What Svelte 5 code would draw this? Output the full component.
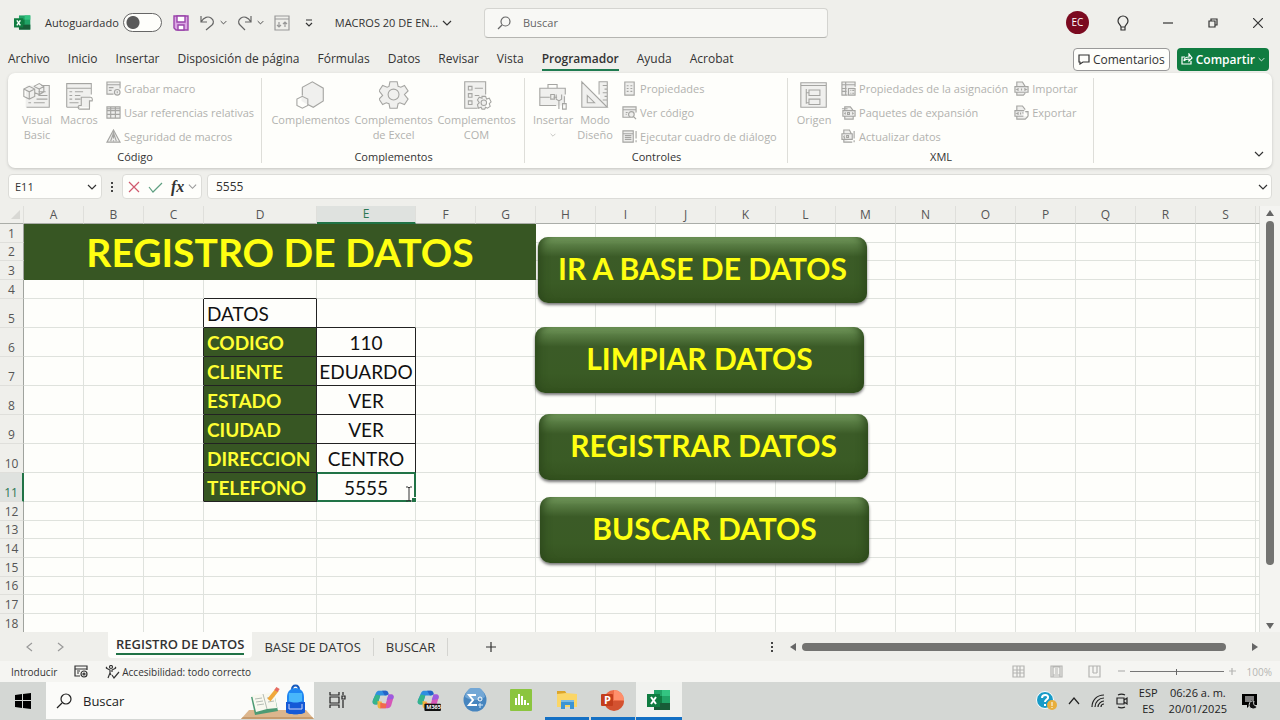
<script>
  const menu = ['Archivo', 'Inicio', 'Insertar', 'Disposición de página', 'Fórmulas', 'Datos', 'Revisar', 'Vista', 'Programador', 'Ayuda', 'Acrobat']

  const groups = [
    {
      name: 'Código',
      big: [
        { icon: 'visualBasic', lines: ['Visual', 'Basic'] },
        { icon: 'macros', lines: ['Macros'] },
      ],
      lists: [[
        { icon: 'record', text: 'Grabar macro' },
        { icon: 'table', text: 'Usar referencias relativas' },
        { icon: 'warning', text: 'Seguridad de macros' },
      ]],
    },
    {
      name: 'Complementos',
      wide: true,
      big: [
        { icon: 'hexagons', lines: ['Complementos'] },
        { icon: 'gear', lines: ['Complementos', 'de Excel'] },
        { icon: 'com', lines: ['Complementos', 'COM'] },
      ],
      lists: [],
    },
    {
      name: 'Controles',
      big: [
        { icon: 'toolbox', lines: ['Insertar'], arrow: true },
        { icon: 'design', lines: ['Modo', 'Diseño'] },
      ],
      lists: [[
        { icon: 'properties', text: 'Propiedades' },
        { icon: 'code', text: 'Ver código' },
        { icon: 'dialog', text: 'Ejecutar cuadro de diálogo' },
      ]],
    },
    {
      name: 'XML',
      big: [{ icon: 'source', lines: ['Origen'] }],
      lists: [
        [
          { icon: 'map', text: 'Propiedades de la asignación' },
          { icon: 'pack', text: 'Paquetes de expansión' },
          { icon: 'refresh', text: 'Actualizar datos' },
        ],
        [
          { icon: 'xmlImport', text: 'Importar' },
          { icon: 'xmlExport', text: 'Exportar' },
        ],
      ],
    },
  ]

  // [shape path, darker detail path]
  const bigIcons = {
    visualBasic: ['M5 6h25v24H4V19', 'M5 30h25V6h-9M18 13h8M18 17h10M16 21h12M7 25h3m3 0h12M2 10l6-3 6 3v8l-6 3-6-3zM2 10l6 3 6-3M8 13v8M13 7l6-3 5 3v6l-5 3-5-2M13 7l6 3 5-3M19 10v6'],
    macros: ['M3 5h26v25H3z', 'M3 30V4h27v12M3 9h27M6 13h3m3 0h9M6 17h3m3 0h6M6 21h3m3 0h6M6 25h10M3 30h14M19 19h10c3 0 2 4 2 4h-3v9H17c-2 0-2-4 0-4h2z'],
    hexagons: ['M18 2l12 7v14l-12 7-12-7V9z', 'M7 17V8l11-6 12 7v14l-11 7-6-3M7 18l6 3v7l-6 3-6-3v-7z'],
    gear: ['M12 2h8l1 5 3 1 4-2 4 6-4 4 4 5-4 6-5-2-2 1-1 5h-8l-1-5-3-1-4 2-4-6 4-4-4-5 4-6 5 2 2-1z', 'M12 2h8l1 5 3 1 4-2 4 6-4 4 4 5-4 6-5-2-2 1-1 5h-8l-1-5-3-1-4 2-4-6 4-4-4-5 4-6 5 2 2-1zM22 16a6 6 0 1 1-12 0 6 6 0 0 1 12 0z'],
    com: ['M3 2h23v29H3z', 'M26 16V2H3v29h14M7 7h4v4H7zM7 15h4v4H7zM7 23h4v4H7zM14 9h9M14 17h5M22 18h4l1 3 3-1 2 4-2 2 1 3-3 2-2-1-1 2h-3l-1-2-3 1-1-4 2-2-2-3 2-3 3 1zM27 25a3 3 0 1 1-6 0 3 3 0 0 1 6 0z'],
    toolbox: ['M2 9h28v19H2z', 'M20 28H2V9h28v7M11 9V5h10v4M2 19h11m4 0h4M14 16h4v5h-4zM20 16v5l3 2v9M26 16v5l-3 2M29 18v7m-2 1h4v6h-4z'],
    design: ['M2 2v28h28V2h-8v20z', 'M2 2v28h28zM8 17v8h8zM21 16V2h9v28M30 6h-5M30 10h-3M30 14h-5M30 18h-3M30 22h-5'],
    source: ['M2 3h28v27H2z', 'M2 3h28v27H2zM2 6h28M8 10v16M8 14h3M8 25h3M11 11h12v6H11zM11 21h12v6H11z'],
  }

  const smallIcons = {
    record: 'M8 14H1V1h14v7M1 4h14M3 7h5M3 10h3M15 12a3 3 0 1 1-6 0 3 3 0 0 1 6 0zM12 11v2',
    table: 'M1 2h14v12H1zM1 4h14M1 6h14M1 10h14M5 2v12M10 2v12',
    warning: 'M8 1l7 13H1zM5 13l3-9 3 9M8 6v4M8 12v1',
    properties: 'M3 1h10v14H3zM5 5h2M9 5h2M5 8h2M9 8h2M5 11h2M9 11h2',
    code: 'M9 13H1V2h14v6M1 5h14M4 8h2M4 10h1M13 10a3 3 0 1 1-6 0 3 3 0 0 1 6 0zM12 12l3 3',
    dialog: 'M1 2h11v12H1zM1 5h11M3 7h7M3 9h7M3 11h7M15 2v8M15 12v2',
    map: 'M7 15H1V1h14v5M1 4h14M5 1v14M1 8h5M1 11h5M8 8h7v7H8zM10 10h1M12 10h2M10 13h1M12 13h2',
    pack: 'M4 6V2h6l3 4M1 4h6M2 6h13v6H2zM5 8l-1 1 1 1M7 8v2h2V8zM12 8l1 1-1 1M4 12v3h9v-3',
    refresh: 'M3 5V1h6l2 4M1 5h11v6H1zM4 7L3 8l1 2M6 7v2h2V7zM14 2v8M14 12v2M3 11v3h9',
    xmlImport: 'M3 6V1h6l3 5M1 6h14v6H1zM5 8L3 9l2 1M8 8v2M11 8l2 1-2 1M3 12v3h7l2-2',
    xmlExport: 'M3 6V1h6l3 4M11 6H1v6h9M5 8L3 9l2 1M7 8v2M9 8l1 1M3 12v3h9l3-3M12 7h3v5',
  }

  const columns = 'ABCDEFGHIJKLMNOPQRS'.split('')
  const plain = ['A', 'B', 'C']
  const after = columns.slice(5)

  const rows = [
    { n: 1, h: 19 }, { n: 2, h: 18 }, { n: 3, h: 19 }, { n: 4, h: 19 },
    { n: 5, h: 29, label: 'DATOS' },
    { n: 6, h: 29, label: 'CODIGO', value: '110' },
    { n: 7, h: 29, label: 'CLIENTE', value: 'EDUARDO' },
    { n: 8, h: 29, label: 'ESTADO', value: 'VER' },
    { n: 9, h: 29, label: 'CIUDAD', value: 'VER' },
    { n: 10, h: 29, label: 'DIRECCION', value: 'CENTRO' },
    { n: 11, h: 29, label: 'TELEFONO', value: '5555' },
    { n: 12, h: 19 }, { n: 13, h: 18 }, { n: 14, h: 19 }, { n: 15, h: 19 },
    { n: 16, h: 18 }, { n: 17, h: 19 }, { n: 18, h: 19 },
  ]

  // shapes drawn over the grid
  const shapes = [
    { text: 'IR A BASE DE DATOS', x: 538, y: 31 },
    { text: 'LIMPIAR DATOS', x: 535, y: 121 },
    { text: 'REGISTRAR DATOS', x: 539, y: 208 },
    { text: 'BUSCAR DATOS', x: 540, y: 291 },
  ]

  let cell = 'E11'
  let formula = '5555'
  let zoom = 50
</script>

{#snippet chevron(size)}
  <svg width={size} height={size} viewBox="0 0 10 10" class="line"><path d="M1 3l4 4 4-4" /></svg>
{/snippet}

{#snippet excel(size)}
  <svg width={size} height={size} viewBox="0 0 24 24">
    <path fill="#21a366" d="M7 2h16v20H7z" />
    <path fill="#33c481" d="M15 2h8v6h-8z" />
    <path fill="#107c41" d="M7 8h8v7H7z" />
    <path fill="#185c37" d="M7 15h16v7H7z" />
    <path fill="#107c41" d="M0 6h13v13H0z" />
    <path stroke="#fff" stroke-width="2" fill="none" d="M4 9l5 7M9 9l-5 7" />
  </svg>
{/snippet}

{#snippet copilot()}
  <path fill="#2f8fe0" d="M7 2h8c2 0 3 2 3 4l-2 1H9L6 17H4c-3 0-4-2-3-5l3-7c1-2 2-3 3-3z" />
  <path fill="#35b58a" d="M4 6l5 1-3 10H4c-3 0-4-2-3-5z" />
  <path fill="#2563c8" d="M11 2h4c2 0 3 2 3 4l-4 1z" />
  <path fill="#f0b43c" d="M6 13l5 1-1 7c-3 1-4-1-4-3z" />
  <path fill="#d557b8" d="M18 6h3c3 0 3 3 2 5l-2 7c-1 2-2 3-4 3h-7l2-4 3-1z" />
  <path fill="#f2694c" d="M9 15l7 1-1 5h-6z" />
  <path fill="#9c5be0" d="M18 6h3c3 0 3 3 2 5l-7 1z" />
{/snippet}

<div class="window">
  <header class="titlebar">
    <div class="quick">
      {@render excel(17)}
      <label class="autosave">Autoguardado <input type="checkbox" role="switch" /></label>
      <button class="save" aria-label="Guardar">
        <svg width="16" height="16" viewBox="0 0 16 16"><path fill="#dba6e4" stroke="#9b45ab" stroke-width="1.4" d="M1 1h14v14H3l-2-2z" /><path fill="#fff" stroke="#9b45ab" stroke-width="1.4" d="M4 1h8v6H4zM5 15v-5h6v5z" /></svg>
      </button>
      <button class="undo" aria-label="Deshacer"><svg width="16" height="16" viewBox="0 0 16 16" class="line"><path d="M1 1v6h6M1 7c3-5 7-6 10-4 3 2 3 5 1 7l-6 5" /></svg></button>
      <button class="tiny" aria-label="Opciones de deshacer">{@render chevron(7)}</button>
      <button class="undo" aria-label="Rehacer"><svg width="16" height="16" viewBox="0 0 16 16" class="line"><path d="M14 1v6H8M14 7C11 2 7 1 4 3 1 5 1 8 3 10l5 5" /></svg></button>
      <button class="tiny" aria-label="Opciones de rehacer">{@render chevron(7)}</button>
      <button class="faded" aria-label="Ordenar"><svg width="16" height="16" viewBox="0 0 16 16" class="line"><path d="M1 1h14v14H1zM1 4h14M5 7v5M3 10l2 2 2-2M11 12V7M9 9l2-2 2 2" /></svg></button>
      <button class="custom" aria-label="Personalizar"><svg width="8" height="8" viewBox="0 0 8 8" class="line"><path d="M1 1h6M1 4l3 3 3-3" /></svg></button>
      <button class="doc">MACROS 20 DE EN... {@render chevron(10)}</button>
    </div>
    <label class="search">
      <svg width="14" height="14" viewBox="0 0 14 14" class="line"><circle cx="8.500" cy="5.500" r="4.500" /><path d="M5 9l-4 4" /></svg>
      <input type="search" placeholder="Buscar" aria-label="Buscar" />
    </label>
    <div class="controls">
      <button aria-label="Cuenta"><span class="avatar">EC</span></button>
      <button aria-label="Sugerencias"><svg width="12" height="16" viewBox="0 0 12 16" class="line"><path d="M4 12c0-2-3-3-3-6a5 5 0 0 1 10 0c0 3-3 4-3 6zM4 12v3h4v-3" /></svg></button>
      <button aria-label="Minimizar"><svg width="10" height="10" viewBox="0 0 10 10" class="line"><path d="M0 5h10" /></svg></button>
      <button aria-label="Restaurar"><svg width="10" height="10" viewBox="0 0 10 10" class="line"><path d="M1 3h6v6H1zM3 3V1h6v6H7" /></svg></button>
      <button aria-label="Cerrar"><svg width="10" height="10" viewBox="0 0 10 10" class="line"><path d="M0 0l10 10M10 0L0 10" /></svg></button>
    </div>
  </header>

  <nav class="menu">
    {#each menu as item}
      <a href="#{item}" class:current={item === 'Programador'}>{item}</a>
    {/each}
    <div class="actions">
      <button class="comments"><svg width="12" height="11" viewBox="0 0 12 11" class="line"><path d="M1 1h10v7H5l-3 2V8H1z" /></svg>Comentarios</button>
      <button class="share"><svg width="12" height="12" viewBox="0 0 12 12" class="line"><path d="M4 4H1v7h9V8M3 8c0-3 2-4 5-4V1l3 4-3 3V6C6 6 4 6 3 8z" /></svg>Compartir {@render chevron(7)}</button>
    </div>
  </nav>

  <section class="ribbon">
    {#each groups as group}
      <div class="group" class:wide={group.wide}>
        <div class="tools">
          {#each group.big as tool}
            <button class="tool" disabled>
              <svg width="30" height="30" viewBox="0 0 33 33"><path class="shape" d={bigIcons[tool.icon][0]} /><path class="detail" d={bigIcons[tool.icon][1]} /></svg>
              {#each tool.lines as line}<span>{line}</span>{/each}
              {#if tool.arrow}<span class="arrow">{@render chevron(6)}</span>{/if}
            </button>
          {/each}
          {#each group.lists as list}
            <div class="list">
              {#each list as item}
                <button disabled>
                  <svg width="15" height="15" viewBox="0 0 16 16"><path class="detail tinted" d={smallIcons[item.icon]} /></svg>
                  {item.text}
                </button>
              {/each}
            </div>
          {/each}
        </div>
        <div class="group-name">{group.name}</div>
      </div>
    {/each}
    <button class="collapse" aria-label="Contraer la cinta">{@render chevron(10)}</button>
  </section>

  <section class="formula-bar">
    <div class="field name">
      <input bind:value={cell} aria-label="Cuadro de nombres" />
      {@render chevron(10)}
    </div>
    <svg width="4" height="12" viewBox="0 0 4 12" class="dots"><path d="M1 1h2v2H1zM1 5h2v2H1zM1 9h2v2H1z" /></svg>
    <div class="field fx">
      <button class="cancel" aria-label="Cancelar"><svg width="12" height="12" viewBox="0 0 12 12" class="line"><path d="M1 1l10 10M11 1L1 11" /></svg></button>
      <button class="accept" aria-label="Introducir"><svg width="15" height="12" viewBox="0 0 15 12" class="line"><path d="M1 6l4 5 9-9" /></svg></button>
      <button class="function" aria-label="Insertar función">fx</button>
      <button class="faded" aria-label="Funciones">{@render chevron(9)}</button>
    </div>
    <div class="field formula">
      <input bind:value={formula} aria-label="Barra de fórmulas" />
      {@render chevron(10)}
    </div>
  </section>

  <main class="sheet">
    <div class="grid">
      <table>
        <colgroup>
          <col class="col-num" />
          {#each columns as c}<col class={c === 'D' ? 'col-label' : c === 'E' ? 'col-value' : 'col-plain'} />{/each}
          <col />
        </colgroup>
        <thead>
          <tr>
            <th class="corner" aria-label="Seleccionar todo"><svg width="9" height="9" viewBox="0 0 9 9"><path d="M9 0v9H0z" /></svg></th>
            {#each columns as c}<th scope="col" class:picked={c === 'E'}>{c}</th>{/each}
            <th></th>
          </tr>
        </thead>
        <tbody>
          {#each rows as row}
            <tr style="height: {row.h}px">
              <th scope="row" class:picked={row.n === 11}>{row.n}</th>
              {#if row.n === 1}
                <td class="banner" colspan="7" rowspan="3">REGISTRO DE DATOS</td>
                {#each after.slice(2) as c}<td></td>{/each}
              {:else if row.n < 4}
                {#each after.slice(2) as c}<td></td>{/each}
              {:else}
                {#each plain as c}<td class:edge={row.label && c === 'C'}></td>{/each}
                <td class:boxed={row.label} class:key={row.value} class:over={row.n === 4}>{row.label ?? ''}</td>
                <td class:boxed={row.value} class:value={row.value} class:over={row.n === 5} class:active={row.n === 11} class:above={row.n === 10}>{row.value ?? ''}</td>
                {#each after as c}<td></td>{/each}
              {/if}
              <td></td>
            </tr>
          {/each}
        </tbody>
      </table>
      {#each shapes as shape}
        <button class="shape-button" style="left: {shape.x}px; top: {shape.y}px">{shape.text}</button>
      {/each}
      <svg class="cursor" width="8" height="16" viewBox="0 0 8 16"><path d="M1 1h2l1 1 1-1h2M4 2v12M1 15h2l1-1 1 1h2" /></svg>
    </div>
    <div class="vscroll">
      <svg width="8" height="6" viewBox="0 0 8 6"><path d="M4 0l4 6H0z" /></svg>
      <div class="thumb"></div>
      <svg width="8" height="6" viewBox="0 0 8 6"><path d="M0 0h8L4 6z" /></svg>
    </div>
  </main>

  <section class="sheet-tabs">
    <div class="steps">
      <button aria-label="Hoja anterior"><svg width="7" height="10" viewBox="0 0 7 10" class="line"><path d="M6 1L1 5l5 4" /></svg></button>
      <button aria-label="Hoja siguiente"><svg width="7" height="10" viewBox="0 0 7 10" class="line"><path d="M1 1l5 4-5 4" /></svg></button>
    </div>
    <button class="tab selected"><span>REGISTRO DE DATOS</span></button>
    <button class="tab">BASE DE DATOS</button>
    <button class="tab">BUSCAR</button>
    <button class="add" aria-label="Hoja nueva"><svg width="12" height="12" viewBox="0 0 12 12" class="line"><path d="M6 1v10M1 6h10" /></svg></button>
    <svg width="4" height="12" viewBox="0 0 4 12" class="dots"><path d="M1 1h2v2H1zM1 5h2v2H1zM1 9h2v2H1z" /></svg>
    <div class="hscroll">
      <svg width="6" height="8" viewBox="0 0 6 8"><path d="M6 0v8L0 4z" /></svg>
      <div class="thumb"></div>
      <svg width="6" height="8" viewBox="0 0 6 8"><path d="M0 0v8l6-4z" /></svg>
    </div>
  </section>

  <section class="status">
    <span class="mode">Introducir</span>
    <svg width="14" height="13" viewBox="0 0 14 13" class="line"><path d="M6 11H1V1h12v4M1 4h12M3 6h3M3 8h2" /><circle cx="10" cy="9" r="3" /><circle cx="10" cy="9" r="1" /></svg>
    <span class="access"><svg width="15" height="14" viewBox="0 0 15 14" class="line"><circle cx="6" cy="2" r="1.500" /><path d="M1 3l4 2v3l-2 5M11 3L7 5v2M5 8l1 2M1 3l1-1M11 3l-1-1M7 10l2 3 5-6" /></svg>Accesibilidad: todo correcto</span>
    <div class="views">
      <button aria-label="Normal"><svg width="13" height="13" viewBox="0 0 13 13" class="line"><path d="M1 1h11v11H1zM1 5h11M1 8h11M5 1v11M8 1v11" /></svg></button>
      <button aria-label="Diseño de página"><svg width="13" height="13" viewBox="0 0 13 13" class="line"><path d="M1 1h11v11H1zM3 1v11M10 1v11M5 4h3M5 6h3M5 8h3M3 10h7M3 2h7" /></svg></button>
      <button aria-label="Salto de página"><svg width="13" height="13" viewBox="0 0 13 13" class="line"><path d="M1 1h11v11H1zM5 1v7M9 1v7M5 8h4" /></svg></button>
    </div>
    <div class="zoom">
      <button aria-label="Alejar"><svg width="7" height="7" viewBox="0 0 7 7" class="line"><path d="M0 3h7" /></svg></button>
      <input type="range" bind:value={zoom} aria-label="Zoom" />
      <button aria-label="Acercar"><svg width="7" height="7" viewBox="0 0 7 7" class="line"><path d="M0 3h7M3 0v7" /></svg></button>
      <span>100%</span>
    </div>
  </section>

  <footer class="taskbar">
    <button class="start" aria-label="Inicio"><svg width="16" height="16" viewBox="0 0 16 16"><path d="M0 2l7-1v6H0zM8 1l8-1v7H8zM0 8h7v7l-7-1zM8 8h8v8l-8-1z" /></svg></button>
    <label class="task-search">
      <svg width="16" height="16" viewBox="0 0 16 16" class="line"><circle cx="10" cy="6" r="5" /><path d="M6 10l-5 5" /></svg>
      <input type="search" placeholder="Buscar" aria-label="Buscar en Windows" />
      <svg class="art" width="73" height="35" viewBox="0 0 73 35">
        <path fill="#dcb68d" d="M8 26h57l8 9H0z" /><path fill="#c69b6d" d="M2 33h69l2 2H0z" />
        <path fill="#4c9b74" d="M10 13l23-4 4 18-23 4z" /><path fill="#f8f8ef" d="M11 11l11-1 11-2 3 16-10 1-11 3z" />
        <path stroke="#b5bdb5" fill="none" d="M22 10l4 15M14 15l7-1M15 18l7-1M16 21l7-1M26 14l6-1M27 18l6-1" />
        <path stroke="#f0a83b" stroke-width="4" d="M28 16l8-10" /><path stroke="#e66c62" stroke-width="4" d="M35 7l2-3" />
        <path fill="none" stroke="#1559bd" stroke-width="2" d="M51 6c0-6 7-6 7 0" />
        <path fill="#1f86f2" d="M46 13c0-12 17-12 17 0v15c0 3-17 3-17 0z" /><path fill="#1559d6" d="M45 18h19v10c0 3-19 3-19 0z" />
        <path fill="#48b7fb" d="M48 9h13v8c-4 2-9 2-13 0z" /><path fill="none" stroke="#d0d5f6" d="M48 20v5h13v-5" />
      </svg>
    </label>
    <div class="apps">
      <button aria-label="Vista de tareas"><svg width="17" height="16" viewBox="0 0 17 16" class="line"><path d="M1 0v3h9V0M1 5h9v6H1zM1 16v-3h9v3M14 0v3M14 8v8" /><path d="M13 4h3v3h-3z" /></svg></button>
      <button aria-label="Copilot"><svg width="22" height="22" viewBox="0 0 24 24">{@render copilot()}</svg></button>
      <button aria-label="Microsoft 365 Copilot"><svg width="24" height="22" viewBox="0 0 26 24">{@render copilot()}<rect x="8" y="16" width="18" height="8" rx="1" fill="#111" /><text x="10" y="22" class="m365">M365</text></svg></button>
      <button aria-label="Estadística"><svg width="24" height="24" viewBox="0 0 24 24"><circle cx="12" cy="12" r="11.500" fill="#4685bf" /><path fill="#73a7d5" d="M2 9a10 10 0 0 1 20 0c-6 4-14 4-20 0z" /><path fill="none" stroke="#fff" stroke-width="2" d="M13 7H6l4 5-4 5h8" /><circle cx="17" cy="11" r="2" fill="none" stroke="#fff" /><path stroke="#d8e9f7" d="M17 15v5M15 17h5" /></svg></button>
      <button aria-label="Gráficos"><svg width="22" height="22" viewBox="0 0 22 22"><rect width="22" height="22" fill="#8bc53f" rx="1" /><path stroke="#fff" stroke-width="2" d="M6 16V9M9 16V5M12 16V7M15 16v-5M18 16v-2" /></svg></button>
      <button class="running" aria-label="Explorador de archivos"><svg width="22" height="20" viewBox="0 0 22 20"><path fill="#dca52b" d="M1 1h8l2 3H1z" /><path fill="#fbd667" d="M1 4l9-1 11 1v13H1z" /><path fill="#3b94d4" d="M5 10h13v9h-4v-4H9v4H5z" /><path fill="#79bae4" d="M5 10h13v2H5z" /></svg></button>
      <button class="running" aria-label="PowerPoint"><svg width="24" height="22" viewBox="0 0 24 22"><circle cx="13" cy="11" r="10" fill="#ed6c47" /><path fill="#ff8f6b" d="M13 1a10 10 0 0 1 10 10H13z" /><path fill="#d35230" d="M3 12h20a10 10 0 0 1-20 0z" /><rect y="5" width="12" height="12" rx="1" fill="#c43e1c" /><text x="3" y="15" class="letter">P</text></svg></button>
      <button class="running front" aria-label="Excel">{@render excel(24)}</button>
    </div>
    <div class="tray">
      <button aria-label="Ayuda"><svg width="21" height="20" viewBox="0 0 21 20"><circle cx="9" cy="9" r="8.500" fill="#189bc7" stroke="#fff" /><path fill="none" stroke="#fff" stroke-width="2" d="M6 7c0-4 7-4 6 0-1 2-3 2-3 4M9 13v2" /><circle cx="16" cy="14" r="5" fill="#e8ae3c" /><path stroke="#fff" d="M16 11v4M16 16v1" /></svg></button>
      <button aria-label="Iconos ocultos"><svg width="12" height="8" viewBox="0 0 12 8" class="line"><path d="M1 7l5-6 5 6" /></svg></button>
      <button aria-label="Red"><svg width="14" height="14" viewBox="0 0 14 14" class="line"><path d="M1 13C1 6 6 1 13 1M4 13c0-5 4-9 9-9M7 13c0-3 3-6 6-6M10 13c0-2 1-3 3-3" /></svg></button>
      <button aria-label="Cámara"><svg width="12" height="16" viewBox="0 0 12 16" class="line"><path d="M1 5h7v6H1zM8 7l3-2v6L8 9M2 2c2-1 5-1 7 0M2 14c2 1 5 1 7 0" /></svg></button>
      <span class="lang">ESP<br />ES</span>
      <time datetime="2025-01-20T18:26">06:26 a. m.<br />20/01/2025</time>
      <button aria-label="Notificaciones"><svg width="16" height="16" viewBox="0 0 16 16"><path d="M0 1h15v11H8l-3 3v-3H0z" /><path stroke="#fff" d="M3 4h9M3 6h9M3 8h6" /><path fill="#111" stroke="#d9dcda" d="M12 8a4 4 0 1 0 3 5c-3 0-4-2-3-5z" /></svg></button>
    </div>
  </footer>
</div>

<style>
  :global(body) {
    margin: 0;
  }
  .window {
    display: flex;
    flex-direction: column;
    height: 100vh;
    overflow: hidden;
    background: #efefeb;
    color: #333;
    font-family: 'Open Sans', 'Noto Sans', sans-serif;
    font-size: 11px;
  }
  button,
  input {
    box-sizing: border-box;
    margin: 0;
    padding: 0;
    border: 0;
    background: none;
    color: inherit;
    font: inherit;
    outline: none;
  }
  button {
    display: flex;
    align-items: center;
    justify-content: center;
    white-space: nowrap;
  }
  svg {
    display: block;
    flex: none;
  }
  .line {
    fill: none;
    stroke: currentColor;
    stroke-width: 1.2;
  }
  .faded {
    color: #999;
  }

  .titlebar {
    display: flex;
    align-items: center;
    height: 45px;
  }
  .quick {
    display: flex;
    align-items: center;
    flex: 0 0 470px;
    padding-left: 14px;
  }
  .autosave {
    display: flex;
    align-items: center;
    gap: 4px;
    margin: 0 11px 0 14px;
  }
  .autosave input {
    appearance: none;
    width: 39px;
    height: 19px;
    border: 1px solid #666;
    border-radius: 10px;
    background: radial-gradient(circle at 9px 50%, #5a5a5a 6px, #fefefb 7px);
  }
  .undo {
    color: #666;
  }
  .tiny {
    margin: 0 10px 0 4px;
  }
  .save {
    margin-right: 11px;
  }
  .custom {
    margin: 0 22px 0 15px;
  }
  .doc {
    gap: 4px;
  }
  .search {
    display: flex;
    align-items: center;
    gap: 12px;
    flex: 0 1 344px;
    height: 30px;
    box-sizing: border-box;
    padding: 0 12px;
    border: 1px solid #d4d4d0;
    border-bottom-color: #b5b5b1;
    border-radius: 4px;
    background: #f8f8f5;
    color: #666;
  }
  .search input {
    flex: 1;
    min-width: 0;
  }
  input::placeholder {
    color: inherit;
    opacity: 1;
  }
  .controls {
    display: flex;
    margin-left: auto;
  }
  .controls button {
    width: 45px;
    height: 45px;
  }
  .avatar {
    width: 23px;
    border-radius: 50%;
    background: #7b0a20;
    color: #fff;
    font-size: 10px;
    line-height: 23px;
  }

  .menu {
    display: flex;
    align-items: center;
    gap: 18px;
    height: 28px;
    padding: 0 11px 0 8px;
    font-size: 12px;
  }
  .menu a {
    height: 20px;
    line-height: 20px;
    color: inherit;
    text-decoration: none;
    white-space: nowrap;
  }
  .menu .current {
    box-shadow: 0 2px #1e7b50;
    font-weight: 600;
  }
  .actions {
    display: flex;
    gap: 7px;
    margin-left: auto;
  }
  .actions button {
    height: 23px;
    gap: 3px;
    padding: 0 4px;
    border-radius: 4px;
  }
  .comments {
    border: 1px solid #999;
    background: #fefefb;
  }
  .share {
    background: #107c41;
    color: #fff;
    font-weight: 600;
  }

  .ribbon {
    display: flex;
    height: 95px;
    margin: 0 8px;
    border-radius: 7px;
    background: #fefefb;
    box-shadow: 0 1px 3px #c4c4c0;
  }
  .group {
    display: flex;
    flex-direction: column;
    flex: 0 0 263px;
    position: relative;
    box-sizing: border-box;
    padding: 3px 7px;
  }
  .group:first-child {
    flex-basis: 254px;
    padding: 3px 8px;
  }
  .group:nth-child(4) {
    flex-basis: 306px;
    padding: 3px 5px;
  }
  .group::after {
    content: '';
    position: absolute;
    top: 5px;
    right: 0;
    bottom: 5px;
    border-right: 1px solid #deded9;
  }
  .tools {
    display: flex;
    height: 73px;
    color: #b2b2af;
  }
  .tool {
    flex-direction: column;
    justify-content: flex-start;
    width: 42px;
    padding-top: 4px;
    line-height: 15px;
  }
  .tool svg {
    margin-bottom: 2px;
  }
  .wide .tool {
    width: 83px;
  }
  .arrow svg {
    margin: 5px 0;
  }
  .shape {
    fill: #f0f0ee;
  }
  .detail {
    fill: none;
    stroke: #a5a5a2;
    stroke-width: 1.2;
  }
  .tinted {
    fill: #eeeeec;
  }
  .list {
    padding-left: 6px;
  }
  .list button {
    gap: 3px;
    height: 24px;
  }
  .group-name {
    line-height: 16px;
    text-align: center;
  }
  .collapse {
    align-self: flex-end;
    margin: 0 8px 9px auto;
  }

  .formula-bar {
    display: flex;
    align-items: center;
    height: 25px;
    margin: 6px 8px 7px;
    font-size: 12px;
  }
  .field {
    display: flex;
    align-items: center;
    box-sizing: border-box;
    height: 25px;
    border: 1px solid #dcdcd8;
    border-radius: 4px;
    background: #fefefb;
  }
  .field input {
    flex: 1;
    min-width: 0;
  }
  .name {
    width: 94px;
    padding: 0 4px 0 6px;
    font-size: 11px;
  }
  .dots {
    margin: 0 8px;
    fill: #444;
  }
  .fx {
    gap: 8px;
    width: 80px;
    padding: 0 3px 0 5px;
    margin-right: 5px;
  }
  .fx .function {
    font: italic bold 16px 'Liberation Serif', serif;
  }
  .fx button:last-child {
    margin-left: -4px;
  }
  .cancel {
    color: #d0596e;
  }
  .accept {
    color: #5e9f80;
  }
  .formula {
    flex: 1;
    padding: 0 3px 0 8px;
  }

  .sheet {
    display: flex;
    flex: 1;
    min-height: 0;
  }
  .grid {
    position: relative;
    flex: 1;
    min-width: 0;
    overflow: hidden;
    background: #fefefb;
  }
  table {
    width: 100%;
    table-layout: fixed;
    border-spacing: 0;
    font-family: Lato, sans-serif;
    font-size: 19px;
    color: #111;
  }
  .col-num {
    width: 24px;
  }
  .col-plain {
    width: 60px;
  }
  .col-label {
    width: 113px;
  }
  .col-value {
    width: 99px;
  }
  th,
  td {
    box-sizing: border-box;
    height: inherit;
    padding: 0;
    line-height: 17px;
    white-space: nowrap;
  }
  td {
    border-right: 1px solid #dfe2dd;
    border-bottom: 1px solid #dfe2dd;
  }
  th {
    background: #efefeb;
    color: #555;
    font-family: 'Open Sans', sans-serif;
    font-size: 12px;
    font-weight: 400;
  }
  thead th {
    height: 18px;
    border-right: 1px solid #dfdfdb;
    border-bottom: 1px solid #aaada8;
    line-height: 16px;
  }
  tbody th {
    border-right: 1px solid #a0a39e;
    border-bottom: 1px solid #dfdfdb;
    vertical-align: bottom;
  }
  .corner svg {
    margin-left: 11px;
    fill: #d8d8d4;
  }
  th.picked {
    background: #dfe2df;
    color: #2c7855;
  }
  thead th.picked {
    border-bottom: 2px solid #217346;
  }
  tbody th.picked {
    border-right: 2px solid #217346;
  }
  td.banner {
    border: 0;
    background: #375623;
    color: #ff1;
    font-size: 39px;
    font-weight: 700;
    line-height: 50px;
    text-align: center;
  }
  td.edge {
    border-right-color: #222;
  }
  td.over {
    border-bottom-color: #222;
  }
  td.boxed {
    border-color: #222;
    padding-left: 3px;
  }
  td.key {
    background: #375623;
    color: #ff3;
    font-weight: 700;
  }
  td.value {
    padding: 0;
    text-align: center;
  }
  td.above {
    border-bottom-color: #217346;
  }
  td.active {
    position: relative;
    border: 1px solid #217346;
    border-width: 1px 2px 2px 1px;
  }
  td.active::after {
    content: '';
    position: absolute;
    right: -3px;
    bottom: -3px;
    width: 4px;
    height: 4px;
    border: 1px solid #fefefb;
    background: #217346;
  }
  .shape-button {
    position: absolute;
    width: 329px;
    height: 66px;
    padding-bottom: 5px;
    border-radius: 10px;
    background: linear-gradient(#779e60, #587c43 12%, #3b5b27 30%, #3a5b25 70%, #34521f);
    box-shadow: 0 2px 3px #777, inset 8px 0 8px -5px #2d491c, inset -8px 0 8px -5px #2d491c;
    color: #ff1;
    font: 700 30px Lato, sans-serif;
  }
  .cursor {
    position: absolute;
    left: 405px;
    top: 280px;
    fill: none;
    stroke: #333;
  }
  .vscroll {
    display: flex;
    flex-direction: column;
    align-items: center;
    gap: 5px;
    width: 20px;
    padding: 4px 0 3px;
    box-sizing: border-box;
    background: #f4f4f1;
  }
  .vscroll svg,
  .hscroll svg {
    fill: #666;
  }
  .thumb {
    border-radius: 4px;
    background: #737371;
  }
  .vscroll .thumb {
    width: 8px;
    flex: 0 0 82%;
    margin-bottom: auto;
  }

  .sheet-tabs {
    display: flex;
    align-items: center;
    height: 29px;
    font-size: 12px;
  }
  .steps {
    display: flex;
    gap: 24px;
    box-sizing: border-box;
    width: 108px;
    padding-left: 26px;
    color: #999;
  }
  .tab {
    height: 18px;
    padding: 0 12px;
    border-right: 1px solid #d4d4d0;
    font-size: 13px;
  }
  .selected {
    align-self: flex-start;
    height: 26px;
    padding: 0 8px;
    border: 0;
    border-radius: 0 0 4px 4px;
    background: #fefefb;
    font-size: 13px;
    font-weight: 600;
  }
  .selected span {
    border-bottom: 2px solid #217346;
    line-height: 18px;
  }
  .add {
    margin: 0 auto 0 37px;
  }
  .hscroll {
    display: flex;
    align-items: center;
    gap: 6px;
    box-sizing: border-box;
    width: 37%;
    padding: 0 6px 0 0;
    margin: 0 16px 0 8px;
  }
  .hscroll .thumb {
    height: 8px;
    flex: 0 1 424px;
    margin-right: auto;
  }

  .status {
    display: flex;
    align-items: center;
    gap: 17px;
    height: 21px;
    padding: 0 8px 0 11px;
    background: #f5f5f2;
    font-size: 10px;
  }
  .access {
    display: flex;
    align-items: center;
    gap: 2px;
  }
  .views {
    display: flex;
    gap: 25px;
    margin-left: auto;
    color: #b5b5b2;
  }
  .zoom {
    display: flex;
    align-items: center;
    gap: 5px;
    color: #b5b5b2;
  }
  .zoom input {
    appearance: none;
    width: 94px;
    height: 10px;
    background: linear-gradient(#777, #777) center / 100% 1px no-repeat;
  }
  .zoom input::-webkit-slider-thumb {
    appearance: none;
    width: 1px;
    height: 6px;
    background: #666;
  }
  .zoom span {
    margin-left: 6px;
  }

  .taskbar {
    display: flex;
    height: 38px;
    background: #d4d7d4;
    color: #222;
  }
  .start {
    width: 46px;
  }
  .task-search {
    display: flex;
    align-items: center;
    gap: 11px;
    box-sizing: border-box;
    width: 268px;
    padding-left: 10px;
    margin-bottom: 1px;
    background: #fbfbf9;
    font-size: 13px;
  }
  .task-search input {
    flex: 1;
    min-width: 0;
  }
  .art {
    align-self: flex-end;
  }
  .apps {
    display: flex;
  }
  .apps button {
    width: 46px;
    border-bottom: 3px solid transparent;
  }
  .apps .running {
    border-image: linear-gradient(90deg, transparent 4px, #1470c4 4px, #1470c4 42px, transparent 42px) 3;
  }
  .apps .front {
    border-image: none;
    border-color: #1470c4;
    background: #f1f2ef;
  }
  .m365 {
    fill: #fff;
    font-size: 6px;
    font-weight: 700;
  }
  .letter {
    fill: #fff;
    font-size: 11px;
    font-weight: 700;
  }
  .tray {
    display: flex;
    align-items: center;
    gap: 11px;
    margin-left: auto;
    padding-right: 22px;
  }
  .tray button {
    height: 38px;
  }
  .lang,
  time {
    line-height: 16px;
    text-align: center;
  }
  time {
    margin-right: 4px;
  }
</style>
